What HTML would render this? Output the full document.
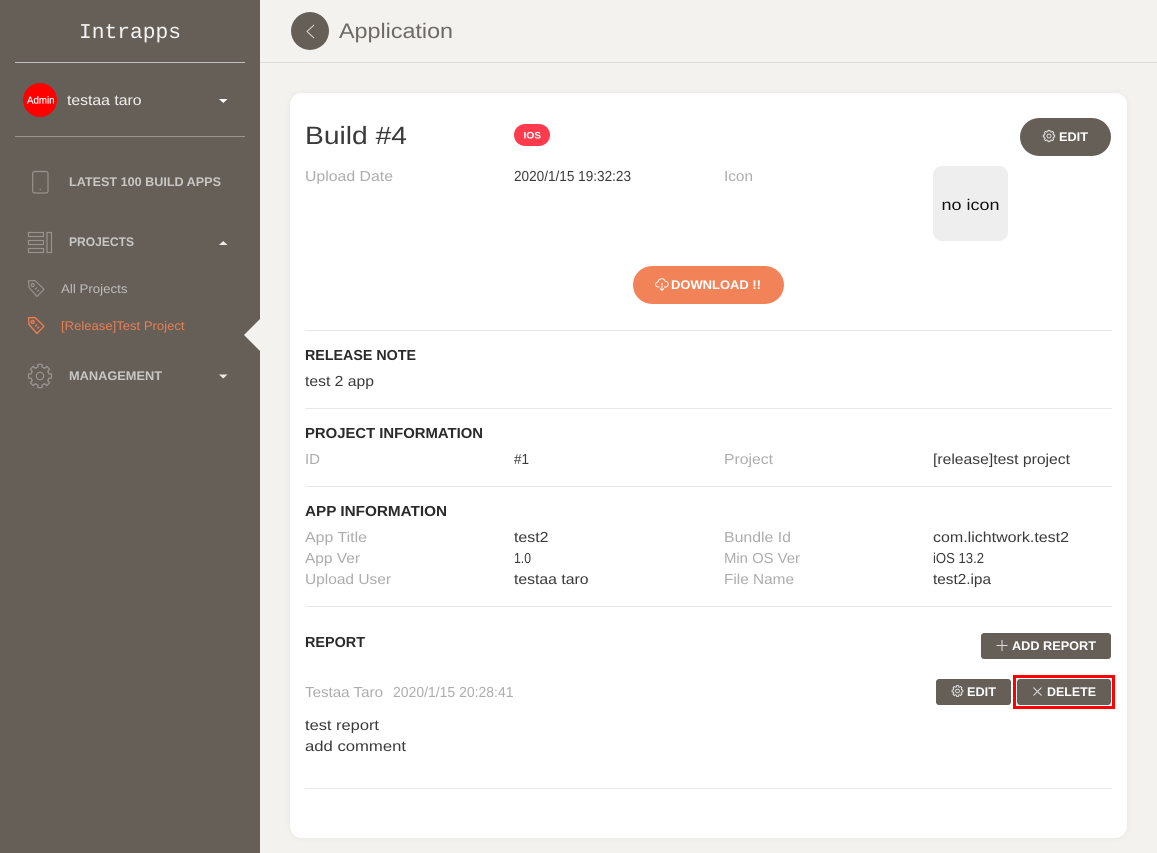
<!DOCTYPE html>
<html lang="en"><head><meta charset="utf-8"><title>Application</title>
<style>
html,body{margin:0;padding:0;width:1157px;height:853px;overflow:hidden;background:#f3f2ee}
svg{display:block}
text{font-family:"Liberation Sans",sans-serif;font-size:14.5px;fill:#3a3a3a;text-rendering:geometricPrecision}
.g{fill:#adadad}
.h{font-weight:bold;font-size:14.5px;fill:#2a2a2a}
.n{font-weight:bold;font-size:12.5px;fill:#c9c7c4}
.w{font-weight:bold;font-size:12.5px;fill:#fff}
.s{font-size:12.5px;fill:#bdbbb8}
</style></head><body>
<svg width="1157" height="853" viewBox="0 0 1157 853" xmlns="http://www.w3.org/2000/svg">
<defs>
<filter id="sh" x="-5%" y="-5%" width="110%" height="110%"><feDropShadow dx="0" dy="0" stdDeviation="3" flood-color="#000" flood-opacity=".05"/></filter>
<path id="gear" d="M-1.89-7.57L-1.74-9.85L1.74-9.85L1.89-7.57L4.02-6.69L5.74-8.19L8.19-5.74L6.69-4.02L7.57-1.89L9.85-1.74L9.85 1.74L7.57 1.89L6.69 4.02L8.19 5.74L5.74 8.19L4.02 6.69L1.89 7.57L1.74 9.85L-1.74 9.85L-1.89 7.57L-4.02 6.69L-5.74 8.19L-8.19 5.74L-6.69 4.02L-7.57 1.89L-9.85 1.74L-9.85-1.74L-7.57-1.89L-6.69-4.02L-8.19-5.74L-5.74-8.19L-4.02-6.69Z" fill="none" stroke-linejoin="round"/>
<g id="tag" fill="none" stroke-linejoin="round"><path d="M1 .8 7.500 .5 16.500 9.200 9.500 16.500 1.500 7.500z"/><circle cx="5.200" cy="5" r="1.500"/><path d="M7.500 9.500 9.500 7.500M9.800 11.500 11.500 9.800"/></g>
</defs>

<rect x="0" y="0" width="260" height="853" fill="#665f58"/>
<rect x="260" y="62" width="897" height="1" fill="#dedddb"/>
<path d="M260 319 244 335 260 351z" fill="#f3f2ee"/>

<text x="79" y="38" textLength="102" lengthAdjust="spacingAndGlyphs" style="font-family:'Liberation Mono',monospace;font-size:21px;fill:#f4f3f1">Intrapps</text>
<rect x="15" y="62" width="230" height="1" fill="#c0bebb"/>
<circle cx="40" cy="100" r="17" fill="#fe0000"/>
<text x="27" y="103.500" textLength="27.500" lengthAdjust="spacingAndGlyphs" style="font-size:10px;fill:#fff;stroke:#fff;stroke-width:.2">Admin</text>
<text x="67" y="105" textLength="74.500" lengthAdjust="spacingAndGlyphs" style="fill:#f0efed">testaa taro</text>
<path d="M219 99h8.500l-4.250 4z" fill="#fff"/>
<rect x="15" y="136" width="230" height="1" fill="#9a9691"/>

<rect x="32.700" y="171.500" width="15.300" height="21.500" rx="2" fill="none" stroke="#96928d" stroke-width="1.200"/>
<circle cx="40.300" cy="189.500" r=".7" fill="#96928d"/>
<text class="n" x="69" y="186" textLength="152" lengthAdjust="spacingAndGlyphs">LATEST 100 BUILD APPS</text>

<g fill="none" stroke="#96928d" stroke-width="1.200">
<rect x="28.500" y="232.500" width="15" height="4"/><rect x="28.500" y="240.500" width="15" height="4"/><rect x="28.500" y="248.500" width="15" height="4"/><rect x="47" y="232.500" width="4.500" height="20"/>
</g>
<text class="n" x="69" y="246" textLength="65" lengthAdjust="spacingAndGlyphs">PROJECTS</text>
<path d="M219 245h8.500l-4.250-4z" fill="#eceae8"/>

<use href="#tag" x="27.500" y="280" stroke="#96928d" stroke-width="1.200"/>
<text class="s" x="61" y="293" textLength="66.500" lengthAdjust="spacingAndGlyphs">All Projects</text>
<use href="#tag" x="27.500" y="317" stroke="#ec7c4f" stroke-width="1.400"/>
<text class="s" x="61" y="330" textLength="123.500" lengthAdjust="spacingAndGlyphs" style="fill:#e57f54">[Release]Test Project</text>

<g transform="translate(40 376)" stroke="#96928d" stroke-width="1.200"><use href="#gear" transform="scale(1.170)" vector-effect="non-scaling-stroke"/><circle r="3.700" fill="none"/></g>
<text class="n" x="69" y="380" textLength="93" lengthAdjust="spacingAndGlyphs">MANAGEMENT</text>
<path d="M219 374.500h8.500l-4.250 4z" fill="#eceae8"/>

<circle cx="310" cy="31" r="19" fill="#665f58"/>
<path d="M314 25 307 31.500 314 38" fill="none" stroke="#dcdad7" stroke-width="1"/>
<text x="339" y="38" textLength="114" lengthAdjust="spacingAndGlyphs" style="font-size:21px;fill:#6f6a64">Application</text>

<rect x="290" y="93" width="837" height="745" rx="12" fill="#fff" filter="url(#sh)"/>

<text x="305" y="144" textLength="102" lengthAdjust="spacingAndGlyphs" style="font-size:25px;fill:#3a3a3a">Build #4</text>
<rect x="514" y="124" width="36" height="22" rx="11" fill="#fd3b4c"/>
<text class="w" x="523.500" y="138.500" textLength="17.500" lengthAdjust="spacingAndGlyphs" style="font-size:9.500px">IOS</text>
<rect x="1020" y="118" width="91" height="38" rx="19" fill="#665f58"/>
<g transform="translate(1049 136)" stroke="#eee" stroke-width="1.500"><use href="#gear" transform="scale(.58)"/><circle r="3.400" fill="none" transform="scale(.58)"/></g>
<text class="w" x="1059" y="141" textLength="29" lengthAdjust="spacingAndGlyphs">EDIT</text>

<text class="g" x="305" y="181" textLength="88" lengthAdjust="spacingAndGlyphs">Upload Date</text>
<text x="514" y="181" textLength="117" lengthAdjust="spacingAndGlyphs">2020/1/15 19:32:23</text>
<text class="g" x="724" y="181" textLength="29" lengthAdjust="spacingAndGlyphs">Icon</text>
<rect x="933" y="166" width="75" height="75" rx="9" fill="#eee"/>
<text x="941.500" y="210" textLength="58" lengthAdjust="spacingAndGlyphs" style="font-size:15.500px;fill:#111">no icon</text>

<rect x="633" y="266" width="151" height="38" rx="19" fill="#f28359"/>
<path d="M659.500 287h-1.200a2.600 2.600 0 0 1-.2-5.200a3.600 3.600 0 0 1 7-.5a2.800 2.800 0 0 1 .6 5.700h-1.700M662 283v7.500M660 288.500l2 2 2-2" fill="none" stroke="#fff" stroke-width=".9" stroke-linejoin="round"/>
<text class="w" x="671" y="289" textLength="90" lengthAdjust="spacingAndGlyphs">DOWNLOAD !!</text>

<rect x="305" y="330" width="807" height="1" fill="#e8e8e8"/>
<text class="h" x="305" y="360" textLength="111" lengthAdjust="spacingAndGlyphs">RELEASE NOTE</text>
<text x="305" y="386" textLength="69" lengthAdjust="spacingAndGlyphs">test 2 app</text>

<rect x="305" y="408" width="807" height="1" fill="#e8e8e8"/>
<text class="h" x="305" y="438" textLength="178" lengthAdjust="spacingAndGlyphs">PROJECT INFORMATION</text>
<text class="g" x="305" y="464" textLength="15" lengthAdjust="spacingAndGlyphs">ID</text>
<text x="514" y="464" textLength="15" lengthAdjust="spacingAndGlyphs">#1</text>
<text class="g" x="724" y="464" textLength="49" lengthAdjust="spacingAndGlyphs">Project</text>
<text x="933" y="464" textLength="137" lengthAdjust="spacingAndGlyphs">[release]test project</text>

<rect x="305" y="486" width="807" height="1" fill="#e8e8e8"/>
<text class="h" x="305" y="516" textLength="142" lengthAdjust="spacingAndGlyphs">APP INFORMATION</text>
<text class="g" x="305" y="542" textLength="62" lengthAdjust="spacingAndGlyphs">App Title</text>
<text x="514" y="542" textLength="34.500" lengthAdjust="spacingAndGlyphs">test2</text>
<text class="g" x="724" y="542" textLength="67" lengthAdjust="spacingAndGlyphs">Bundle Id</text>
<text x="933" y="542" textLength="136" lengthAdjust="spacingAndGlyphs">com.lichtwork.test2</text>
<text class="g" x="305" y="563" textLength="55" lengthAdjust="spacingAndGlyphs">App Ver</text>
<text x="514" y="563" textLength="17" lengthAdjust="spacingAndGlyphs">1.0</text>
<text class="g" x="724" y="563" textLength="76" lengthAdjust="spacingAndGlyphs">Min OS Ver</text>
<text x="933" y="563" textLength="51" lengthAdjust="spacingAndGlyphs">iOS 13.2</text>
<text class="g" x="305" y="584" textLength="86" lengthAdjust="spacingAndGlyphs">Upload User</text>
<text x="514" y="584" textLength="74.500" lengthAdjust="spacingAndGlyphs">testaa taro</text>
<text class="g" x="724" y="584" textLength="70" lengthAdjust="spacingAndGlyphs">File Name</text>
<text x="933" y="584" textLength="58" lengthAdjust="spacingAndGlyphs">test2.ipa</text>

<rect x="305" y="606" width="807" height="1" fill="#e8e8e8"/>
<text class="h" x="305" y="647" textLength="60" lengthAdjust="spacingAndGlyphs">REPORT</text>
<rect x="981" y="633" width="130" height="26" rx="3" fill="#665f58"/>
<path d="M1002 640v11M996.500 645.500h11" stroke="#ddd" stroke-width="1" fill="none"/>
<text class="w" x="1012" y="650" textLength="84" lengthAdjust="spacingAndGlyphs">ADD REPORT</text>

<text class="g" x="305" y="697" textLength="78" lengthAdjust="spacingAndGlyphs">Testaa Taro</text>
<text class="g" x="393" y="697" textLength="120.500" lengthAdjust="spacingAndGlyphs">2020/1/15 20:28:41</text>

<rect x="936" y="679" width="75" height="26" rx="3" fill="#665f58"/>
<g transform="translate(957.500 691)" stroke="#eee" stroke-width="1.600"><use href="#gear" transform="scale(.55)"/><circle r="3.400" fill="none" transform="scale(.55)"/></g>
<text class="w" x="967" y="696" textLength="29" lengthAdjust="spacingAndGlyphs">EDIT</text>

<rect x="1017" y="679" width="94" height="26" rx="3" fill="#665f58"/>
<rect x="1014.500" y="676.500" width="99" height="31" fill="none" stroke="#fe0000" stroke-width="3"/>
<path d="M1033.500 687.500l8 8M1041.500 687.500l-8 8" stroke="#ddd" stroke-width="1" fill="none"/>
<text class="w" x="1047" y="696" textLength="49" lengthAdjust="spacingAndGlyphs">DELETE</text>

<text x="305" y="730" textLength="74" lengthAdjust="spacingAndGlyphs">test report</text>
<text x="305" y="751" textLength="101" lengthAdjust="spacingAndGlyphs">add comment</text>
<rect x="305" y="788" width="807" height="1" fill="#e8e8e8"/>
</svg>
</body></html>
